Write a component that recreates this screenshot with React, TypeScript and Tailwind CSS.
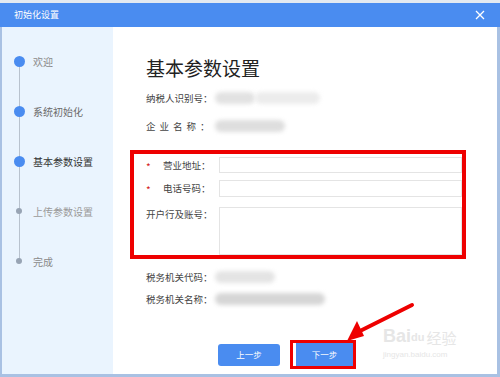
import React from "react";

const font = { fontFamily: '"Noto Sans CJK SC", "Noto Sans", sans-serif' };

function Step({ label, big, color }: { label: string; big: boolean; color: string }) {
  return (
    <div className="h-[50px] flex items-center">
      <div className={`w-[31px] flex ${big ? "pl-[12px]" : "pl-[14px]"}`}>
        {big ? (
          <div className="w-[11px] h-[11px] rounded-full bg-[#4a8cf0] relative z-10" />
        ) : (
          <div className="w-[6px] h-[6px] rounded-full bg-[#98a4b4] relative z-10" />
        )}
      </div>
      <span className={`text-[10px] ${color}`}>{label}</span>
    </div>
  );
}

function Blur({ w, tone = "bg-[#d9d9d9]" }: { w: number; tone?: string }) {
  return (
    <div className="flex items-center blur-[2px]" style={{ width: w }}>
      <div className={`h-[12px] flex-1 rounded-full ${tone}`} />
    </div>
  );
}

export default function App() {
  return (
    <div className="w-[500px] h-[377px] bg-white flex flex-col overflow-hidden relative" style={font}>
      <div className="h-[3px] bg-[#e3e9f1]" />
      <div className="h-[24px] bg-[#4a8cf0] flex items-center justify-between pl-[14px] pr-[15px]">
        <span className="text-[9px] text-white">初始化设置</span>
        <svg width="10" height="10" viewBox="0 0 10 10">
          <path d="M1 1 L9 9 M9 1 L1 9" stroke="#ffffff" strokeWidth="1.3" />
        </svg>
      </div>
      <div className="flex-1 flex border-l-[2px] border-r-[3px] border-b-[3px] border-[#a9c1e3]">
        {/* sidebar */}
        <div className="w-[111px] bg-[#eaf4fe] pt-[9px]">
          <div className="relative">
            <div className="absolute left-[17px] top-[25px] h-[200px] w-px bg-[#b8c2ce]" />
            <Step label="欢迎" big color="text-[#8a8a8a]" />
            <Step label="系统初始化" big color="text-[#6a6a6a]" />
            <Step label="基本参数设置" big color="text-[#333333]" />
            <Step label="上传参数设置" big={false} color="text-[#9a9a9a]" />
            <Step label="完成" big={false} color="text-[#8a8a8a]" />
          </div>
        </div>
        {/* main */}
        <div className="flex-1 pl-[17px] flex flex-col">
          <div className="ml-[16px] mt-[27px] text-[19px] leading-[28px] text-[#222]">基本参数设置</div>
          <div className="ml-[16px] mt-[6px] h-[20px] flex items-center">
            <span className="w-[69px] text-[9.5px] text-[#444] whitespace-nowrap">纳税人识别号：</span>
            <div className="flex">
              <Blur w={40} tone="bg-[#e2e2e2]" />
              <Blur w={65} tone="bg-[#ececec]" />
            </div>
          </div>
          <div className="ml-[16px] mt-[8px] h-[20px] flex items-center">
            <span className="w-[69px] text-[9.5px] text-[#444] tracking-[4px] whitespace-nowrap overflow-hidden">企业名称：</span>
            <Blur w={70} tone="bg-[#dedede]" />
          </div>
          {/* red box */}
          <div className="mt-[14px] w-[336px] border-[4px] border-[#ee0000] pl-[12px] pt-[3px] flex flex-col">
            <div className="h-[16px] flex items-center">
              <div className="w-[73px] flex items-center text-[9.5px] text-[#444] whitespace-nowrap">
                <span className="w-[17px] text-[#d42020] text-[10px] leading-none pt-[3px]">*</span>
                <span>营业地址：</span>
              </div>
              <div className="flex-1 h-[16px] border border-[#e4e4e4] bg-white" />
            </div>
            <div className="mt-[7px] h-[17px] flex items-center">
              <div className="w-[73px] flex items-center text-[9.5px] text-[#444] whitespace-nowrap">
                <span className="w-[17px] text-[#d42020] text-[10px] leading-none pt-[3px]">*</span>
                <span>电话号码：</span>
              </div>
              <div className="flex-1 h-[17px] border border-[#e4e4e4] bg-white" />
            </div>
            <div className="mt-[10px] h-[48px] flex items-start">
              <div className="w-[73px] text-[9.5px] text-[#444] whitespace-nowrap">开户行及账号：</div>
              <div className="flex-1 h-[48px] border border-[#e4e4e4] bg-white" />
            </div>
          </div>
          <div className="ml-[16px] mt-[8px] h-[20px] flex items-center">
            <span className="w-[69px] text-[9.5px] text-[#444] whitespace-nowrap">税务机关代码：</span>
            <Blur w={60} tone="bg-[#e4e4e4]" />
          </div>
          <div className="ml-[16px] mt-[2px] h-[20px] flex items-center">
            <span className="w-[69px] text-[9.5px] text-[#444] whitespace-nowrap">税务机关名称：</span>
            <Blur w={110} tone="bg-[#d6d6d6]" />
          </div>
          <div className="mt-[31px] pl-[88px] flex items-center gap-[10px]">
            <div className="w-[62px] h-[22px] rounded-[3px] bg-[#4a8cf0] flex items-center justify-center text-white text-[8.5px]">上一步</div>
            <div className="w-[66px] h-[29px] border-[3px] border-[#ee0000] flex bg-white">
              <div className="w-[3px]" />
              <div className="flex-1 bg-[#4a8cf0] flex items-center justify-center text-white text-[8.5px]">下一步</div>
            </div>
          </div>
        </div>
      </div>
      {/* red arrow annotation */}
      <svg className="absolute left-0 top-0 pointer-events-none" width="500" height="377" viewBox="0 0 500 377">
        <line x1="412" y1="305" x2="356" y2="333" stroke="#ee0000" strokeWidth="4" strokeLinecap="round" />
        <polygon points="347,341 357,321 364,336" fill="#ee0000" />
      </svg>
      {/* watermark */}
      <div className="absolute left-[383px] top-[327px] flex flex-col items-start pointer-events-none">
        <div className="flex items-end text-[#e6e6e6] leading-none">
          <span className="text-[18px] font-bold" style={{ fontFamily: '"Liberation Sans", sans-serif' }}>Bai</span>
          <span className="text-[11px] font-bold mb-[2px]" style={{ fontFamily: '"Liberation Sans", sans-serif' }}>du</span>
          <span className="text-[15px] ml-[2px]">经验</span>
        </div>
        <div className="text-[8px] text-[#e6e6e6] mt-[4px]" style={{ fontFamily: '"Liberation Sans", sans-serif' }}>jingyan.baidu.com</div>
      </div>
    </div>
  );
}
